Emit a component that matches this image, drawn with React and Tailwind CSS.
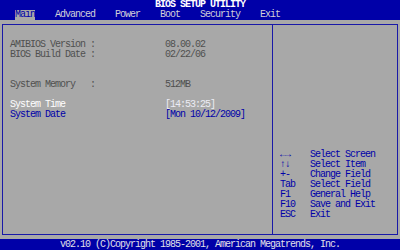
import React from "react";

const menu = ["Main", "Advanced", "Power", "Boot", "Security", "Exit"];

const help = [
  ["\u2190\u2192", "Select Screen"],
  ["\u2191\u2193", "Select Item"],
  ["+-", "Change Field"],
  ["Tab", "Select Field"],
  ["F1", "General Help"],
  ["F10", "Save and Exit"],
  ["ESC", "Exit"],
];

function Row({ label, value, labelClass, valueClass }) {
  return (
    <div className="flex h-[10px]">
      <span className={"w-[155px] whitespace-pre " + labelClass}>{label}</span>
      <span className={"whitespace-pre " + valueClass}>{value}</span>
    </div>
  );
}

export default function App() {
  return (
    <div
      className="flex h-[250px] w-[400px] flex-col overflow-hidden bg-[#a8a8a8] text-[10px] leading-[10px] tracking-[-1px]"
      style={{ fontFamily: '"Liberation Mono", "DejaVu Sans Mono", monospace' }}
    >
      {/* title */}
      <div className="h-[10px] bg-[#0000a8] text-center font-bold text-white">
        BIOS SETUP UTILITY
      </div>

      {/* menu bar */}
      <div className="flex h-[10px] gap-[20px] bg-[#0000a8] pl-[15px] text-[#d0d0d8]">
        {menu.map((item, i) => (
          <span
            key={item}
            className={i === 0 ? "bg-[#a8a8a8] text-[#0000a8]" : ""}
          >
            {item}
          </span>
        ))}
      </div>

      {/* main frame */}
      <div className="flex flex-1 px-[2px] pt-[4px] pb-[4px]">
        <div className="flex flex-1 border border-[#1818a8]">
          {/* left panel */}
          <div className="w-[269px] pl-[7px] pt-[15px]">
            <Row
              label="AMIBIOS Version :"
              value="08.00.02"
              labelClass="text-[#505050]"
              valueClass="text-[#505050]"
            />
            <Row
              label="BIOS Build Date :"
              value="02/22/06"
              labelClass="text-[#505050]"
              valueClass="text-[#505050]"
            />
            <div className="h-[20px]" />
            <Row
              label="System Memory   :"
              value="512MB"
              labelClass="text-[#505050]"
              valueClass="text-[#505050]"
            />
            <div className="h-[10px]" />
            <Row
              label="System Time"
              value="[14:53:25]"
              labelClass="text-white"
              valueClass="text-[#ececf4]"
            />
            <Row
              label="System Date"
              value="[Mon 10/12/2009]"
              labelClass="text-[#0000a8]"
              valueClass="text-[#0000a8]"
            />
          </div>

          {/* help panel */}
          <div className="flex-1 border-l border-[#1818a8] pl-[7px] pt-[125px] text-[#0000a8]">
            {help.map(([key, text]) => (
              <div key={key} className="flex h-[10px]">
                <span className="w-[30px]">{key}</span>
                <span>{text}</span>
              </div>
            ))}
          </div>
        </div>
      </div>

      {/* footer */}
      <div className="h-[11px] bg-[#0000a8] pt-[1px] text-center text-[#e0e0e8]">
        v02.10 (C)Copyright 1985-2001, American Megatrends, Inc.
      </div>
    </div>
  );
}
